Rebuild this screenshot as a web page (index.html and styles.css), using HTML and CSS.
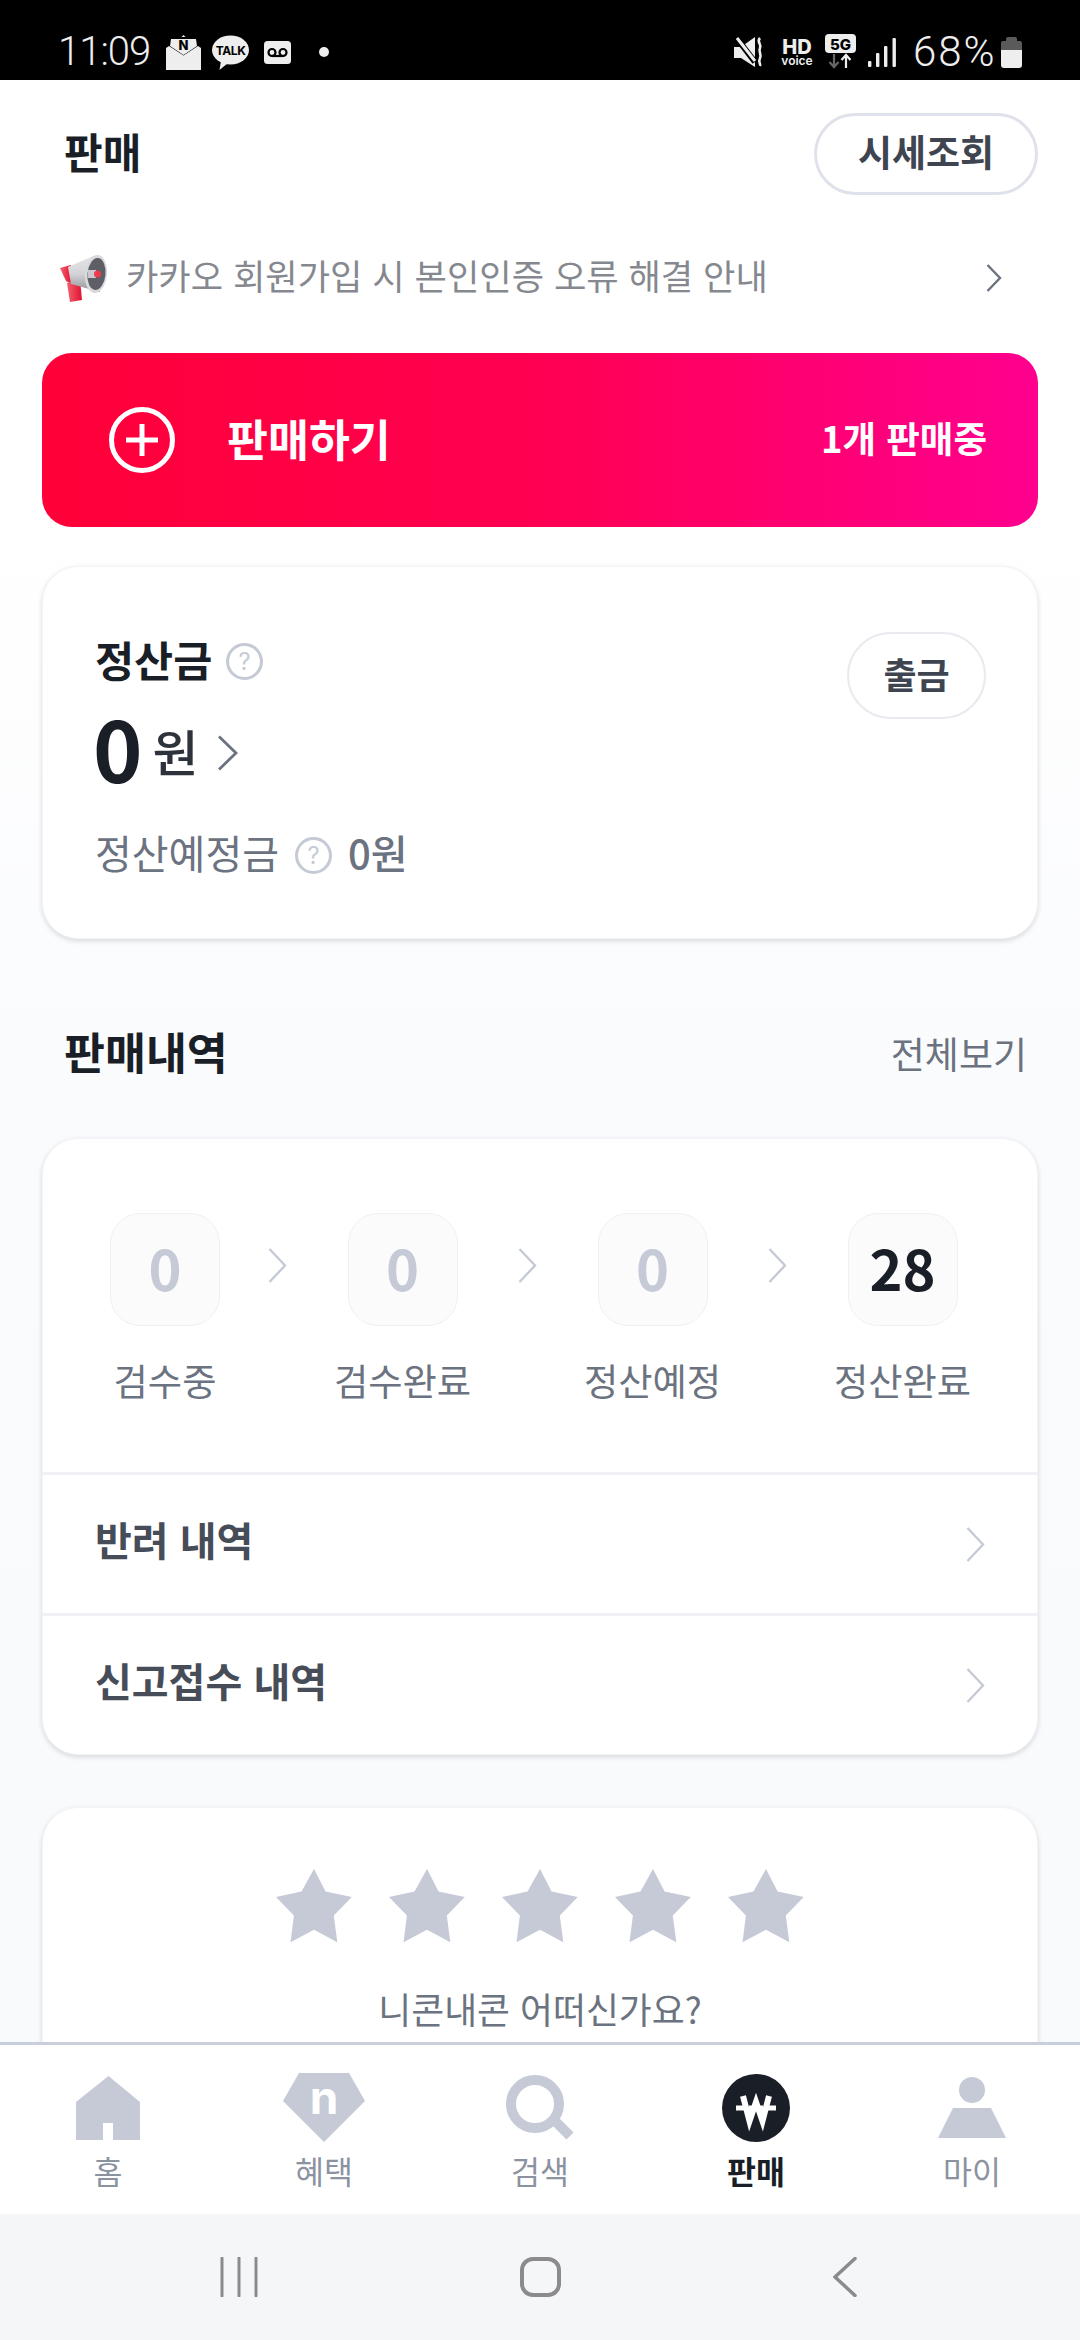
FILE: index.html
```html
<!DOCTYPE html>
<html lang="ko">
<head>
<meta charset="utf-8">
<title>판매</title>
<link rel="stylesheet" href="styles.css">
</head>
<body>
<div class="app">
  <header class="status">
    <span class="st-time">11:09</span>
    <svg class="st-mail" width="35" height="35" viewBox="0 0 35 35"><path d="M15.5 2 17.5 0 19.500 2Z" fill="#eee"/><path d="M4 11 5 4H30L31 11 17.500 20Z" fill="#eee"/><path d="M0 13 3 11 17.500 20.500 32 11 35 13V35H0Z" fill="#eee"/><text x="17.500" y="15" class="st-n">N</text></svg>
    <svg class="st-talk" width="37" height="35" viewBox="0 0 37 35"><ellipse cx="18.500" cy="15" rx="18.500" ry="14.500" fill="#eee"/><path d="M9 26 7.500 35 16 28Z" fill="#eee"/><text x="18.500" y="19.500" class="st-tk">TALK</text></svg>
    <svg class="st-vm" width="27" height="23" viewBox="0 0 27 23"><rect width="27" height="23" rx="3.500" fill="#eee"/><circle cx="8" cy="11.500" r="3.500" fill="none" stroke="#000" stroke-width="2.200"/><circle cx="19" cy="11.500" r="3.500" fill="none" stroke="#000" stroke-width="2.200"/><path d="M8 15H19" stroke="#000" stroke-width="2.200"/></svg>
    <span class="st-dot"></span>
    <div class="st-right">
      <svg width="29" height="30" viewBox="0 0 29 30"><path d="M0 10H7L21 0V30L7 21H0Z" fill="#eee"/><path d="M1 -1 21 25" stroke="#000" stroke-width="6"/><path d="M3 1 21 24" stroke="#eee" stroke-width="3"/><path d="M26 1C22 5 28 7 26 11 24 15 28 17 26 21 24 25 27 27 26 29" fill="none" stroke="#eee" stroke-width="2.600"/></svg>
      <svg class="st-hd" width="34" height="40" viewBox="0 -5 34 40"><text x="17" y="17" class="st-hdt">HD</text><text x="17" y="28" class="st-voice">voice</text></svg>
      <svg class="st-5g" width="31" height="35" viewBox="0 0 31 35"><rect width="31" height="19" rx="4" fill="#eee"/><text x="15.500" y="15.500" class="st-5gt">5G</text><path d="M9 20V33M4.500 28 9 33 13.500 28" fill="none" stroke="#666" stroke-width="2.200"/><path d="M21 34V21M16.500 26 21 21 25.500 26" fill="none" stroke="#eee" stroke-width="2.200"/></svg>
      <svg class="st-sig" width="28" height="29" viewBox="0 0 28 29"><rect y="23" width="3.400" height="6" rx="1" fill="#eee"/><rect x="8" y="15" width="3.400" height="14" rx="1" fill="#eee"/><rect x="16" y="8" width="3.400" height="21" rx="1" fill="#eee"/><rect x="24.500" width="3.400" height="29" rx="1" fill="#eee"/></svg>
      <span class="st-pct">68%</span>
      <svg class="st-bat" width="21" height="31" viewBox="0 0 21 31"><path d="M5 4V2Q5 0 7 0H14Q16 0 16 2V4H19Q21 4 21 6V13H0V6Q0 4 2 4Z" fill="#5a5a5a"/><path d="M0 13H21V28Q21 31 18 31H3Q0 31 0 28Z" fill="#eee"/></svg>
    </div>
  </header>

  <main class="main">
    <div class="top">
      <h1 class="top-title">판매</h1>
      <button class="quote-btn">시세조회</button>
    </div>

    <div class="notice">
      <svg class="notice-icon" width="48" height="47" viewBox="0 0 48 47">
        <defs>
          <linearGradient id="cone" x1="0" y1="0" x2="0" y2="1"><stop offset="0" stop-color="#e6e6e8"/><stop offset=".5" stop-color="#d4d4d8"/><stop offset="1" stop-color="#8f8f95"/></linearGradient>
          <linearGradient id="red" x1="0" y1="0" x2="1" y2="0"><stop offset="0" stop-color="#f3606f"/><stop offset="1" stop-color="#e0122f"/></linearGradient>
        </defs>
        <path d="M0 13 11 10 12 29 6 26Z" fill="url(#red)"/>
        <path d="M7 28 20 24 22 45 10 47Z" fill="url(#red)"/>
        <path d="M8 12 33 1 40 37 11 29Z" fill="url(#cone)"/>
        <ellipse cx="36" cy="19" rx="11" ry="19" transform="rotate(6 36 19)" fill="#d9d9de"/>
        <ellipse cx="36.500" cy="19" rx="9" ry="16" transform="rotate(6 36.500 19)" fill="#5e5e66"/>
        <path d="M28 15H36V23H28Z" fill="#c8c8ce"/>
        <circle cx="37.500" cy="19" r="3.500" fill="#f0384f"/>
      </svg>
      <span class="notice-text">카카오 회원가입 시 본인인증 오류 해결 안내</span>
      <svg class="chev" width="16" height="28" viewBox="0 0 16 28"><path d="M1.500 1 14 14 1.500 27" fill="none" stroke="#6b7280" stroke-width="2.400"/></svg>
    </div>

    <a class="sell">
      <svg width="66" height="66" viewBox="0 0 66 66"><circle cx="33" cy="33" r="30.500" fill="none" stroke="#fff" stroke-width="5"/><path d="M33 17V49M17 33H49" stroke="#fff" stroke-width="5"/></svg>
      <span class="sell-label">판매하기</span>
      <span class="sell-count">1개 판매중</span>
    </a>

    <section class="card balance">
      <div class="bal-left">
        <div class="bal-title"><span class="bal-title-text">정산금</span>
          <svg class="help" width="37" height="37" viewBox="0 0 36 36"><circle cx="18" cy="18" r="16.500" fill="none" stroke="#c5cad6" stroke-width="3"/><text x="18" y="26" class="help-q">?</text></svg>
        </div>
        <div class="bal-amount"><span class="bal-num">0</span><span class="bal-unit">원</span>
          <svg width="22" height="36" viewBox="0 0 22 36"><path d="M2 1.500 19 18 2 34.500" fill="none" stroke="#6b7280" stroke-width="2.800"/></svg>
        </div>
        <div class="bal-sub"><span class="bal-sub-text">정산예정금</span>
          <svg class="help" width="37" height="37" viewBox="0 0 36 36"><circle cx="18" cy="18" r="16.500" fill="none" stroke="#c5cad6" stroke-width="3"/><text x="18" y="26" class="help-q">?</text></svg>
          <span class="bal-sub-val">0원</span>
        </div>
      </div>
      <button class="withdraw">출금</button>
    </section>

    <div class="sec-head">
      <h2 class="sec-title">판매내역</h2>
      <span class="sec-more">전체보기</span>
    </div>

    <section class="card history">
      <div class="steps">
        <div class="step"><div class="step-box">0</div><div class="step-label">검수중</div></div>
        <svg class="step-chev" width="19" height="35" viewBox="0 0 19 35"><path d="M1.500 1 17 17.500 1.500 34" fill="none" stroke="#c5cad6" stroke-width="2.400"/></svg>
        <div class="step"><div class="step-box">0</div><div class="step-label">검수완료</div></div>
        <svg class="step-chev" width="19" height="35" viewBox="0 0 19 35"><path d="M1.500 1 17 17.500 1.500 34" fill="none" stroke="#c5cad6" stroke-width="2.400"/></svg>
        <div class="step"><div class="step-box">0</div><div class="step-label">정산예정</div></div>
        <svg class="step-chev" width="19" height="35" viewBox="0 0 19 35"><path d="M1.500 1 17 17.500 1.500 34" fill="none" stroke="#c5cad6" stroke-width="2.400"/></svg>
        <div class="step"><div class="step-box is-on">28</div><div class="step-label">정산완료</div></div>
      </div>
      <div class="hist-row"><span class="hist-text">반려 내역</span>
        <svg width="19" height="35" viewBox="0 0 19 35"><path d="M1.500 1 17 17.500 1.500 34" fill="none" stroke="#c5cad6" stroke-width="2.400"/></svg>
      </div>
      <div class="hist-row"><span class="hist-text">신고접수 내역</span>
        <svg width="19" height="35" viewBox="0 0 19 35"><path d="M1.500 1 17 17.500 1.500 34" fill="none" stroke="#c5cad6" stroke-width="2.400"/></svg>
      </div>
    </section>

    <section class="card rating">
      <div class="stars">
        <svg width="76" height="74" viewBox="0 0 76 74"><path class="star" d="M38 0 49.600 22.500 75.800 28 57.800 46.400 61.300 73.200 38 60.700 14.500 73.200 17.900 46.400 0 28 25.500 22.500Z"/></svg>
        <svg width="76" height="74" viewBox="0 0 76 74"><path class="star" d="M38 0 49.600 22.500 75.800 28 57.800 46.400 61.300 73.200 38 60.700 14.500 73.200 17.900 46.400 0 28 25.500 22.500Z"/></svg>
        <svg width="76" height="74" viewBox="0 0 76 74"><path class="star" d="M38 0 49.600 22.500 75.800 28 57.800 46.400 61.300 73.200 38 60.700 14.500 73.200 17.900 46.400 0 28 25.500 22.500Z"/></svg>
        <svg width="76" height="74" viewBox="0 0 76 74"><path class="star" d="M38 0 49.600 22.500 75.800 28 57.800 46.400 61.300 73.200 38 60.700 14.500 73.200 17.900 46.400 0 28 25.500 22.500Z"/></svg>
        <svg width="76" height="74" viewBox="0 0 76 74"><path class="star" d="M38 0 49.600 22.500 75.800 28 57.800 46.400 61.300 73.200 38 60.700 14.500 73.200 17.900 46.400 0 28 25.500 22.500Z"/></svg>
      </div>
      <p class="rating-q">니콘내콘 어떠신가요?</p>
    </section>
  </main>

  <nav class="tabs">
    <a class="tab">
      <svg width="100" height="80" viewBox="0 -8 100 80"><path class="tab-ic" d="M50.500 3 82 29V67H55V50H45V67H18V29Z"/></svg>
      <span>홈</span>
    </a>
    <a class="tab">
      <svg width="100" height="80" viewBox="0 -8 100 80"><path class="tab-ic" d="M25 0H75L91 28 50 69 9 28Z"/><text x="50" y="41" class="tab-n">n</text></svg>
      <span>혜택</span>
    </a>
    <a class="tab">
      <svg width="100" height="80" viewBox="0 -8 100 80"><circle cx="45" cy="31" r="24" fill="none" stroke="#c5cad6" stroke-width="10"/><path d="M62 45 80 63" stroke="#c5cad6" stroke-width="10"/></svg>
      <span>검색</span>
    </a>
    <a class="tab is-active">
      <svg width="100" height="80" viewBox="0 -8 100 80"><circle cx="50" cy="35" r="34" fill="#1a1f27"/><path d="M37 23 43.500 48 50 29 56.500 48 63 23" fill="none" stroke="#fff" stroke-width="6"/><path d="M30 35H38M62 35H70M43 35H57" stroke="#fff" stroke-width="5"/></svg>
      <span>판매</span>
    </a>
    <a class="tab">
      <svg width="100" height="80" viewBox="0 -8 100 80"><circle class="tab-ic" cx="50" cy="17" r="13"/><path class="tab-ic" d="M31 35H69L84 65H16Z"/></svg>
      <span>마이</span>
    </a>
  </nav>

  <footer class="sysnav">
    <svg width="38" height="40" viewBox="0 0 38 40"><path d="M2 1V39M19 1V39M36 1V39" stroke="#8b8b8d" stroke-width="3" stroke-linecap="round"/></svg>
    <svg class="sys-home" width="41" height="40" viewBox="0 0 41 40"><rect x="2" y="2" width="37" height="36" rx="11" fill="none" stroke="#8b8b8d" stroke-width="4"/></svg>
    <svg class="sys-back" width="24" height="40" viewBox="0 0 24 40"><path d="M22 1.500 2 20 22 38.500" fill="none" stroke="#8b8b8d" stroke-width="3.500" stroke-linecap="round"/></svg>
  </footer>
</div>
</body>
</html>
```
FILE: styles.css
```css
* { box-sizing: border-box; }
html, body { margin: 0; padding: 0; }
body { font-family: "Noto Sans CJK KR", sans-serif; color: #1a1f27; background: #fff; }
h1, h2, p { margin: 0; }
button { font: inherit; background: #fff; cursor: pointer; }

.app { width: 1080px; height: 2340px; display: flex; flex-direction: column; overflow: hidden; }

/* status bar */
.status { height: 80px; flex: none; background: #000; color: #eee; display: flex; align-items: center; padding: 24px 58px 0; }
.status svg { display: block; flex: none; }
.st-time { font-family: Roboto, sans-serif; font-weight: 300; font-size: 40px; line-height: 40px; width: 93px; letter-spacing: -1px; }
.st-mail { margin-left: 15px; }
.st-talk { margin-left: 11px; }
.st-vm { margin-left: 15px; }
.st-dot { width: 10px; height: 10px; border-radius: 50%; background: #eee; margin-left: 28px; }
.st-right { margin-left: auto; display: flex; align-items: center; }
.st-hd { margin-left: 17px; }
.st-5g { margin-left: 11px; margin-top: -2px; }
.st-sig { margin-left: 12px; }
.st-pct { font-family: Roboto, sans-serif; font-weight: 300; font-size: 42px; line-height: 40px; margin-left: 17px; width: 88px; letter-spacing: 2px; white-space: nowrap; }
.st-n { font: 800 13px Inter, sans-serif; text-anchor: middle; fill: #000; }
.st-tk { font: 700 12px Inter, sans-serif; text-anchor: middle; fill: #000; letter-spacing: -.4px; }
.st-hdt { font: 800 20px Inter, sans-serif; text-anchor: middle; fill: #eee; }
.st-voice { font: 600 12px Inter, sans-serif; text-anchor: middle; fill: #eee; }
.st-5gt { font: 800 15px Inter, sans-serif; text-anchor: middle; fill: #000; }

/* scrolling area */
.main { flex: 1; min-height: 0; overflow: hidden; padding: 33px 42px 0; background: linear-gradient(#fff 0, #fff 420px, #fafbfd 1000px, #f9fafc 100%); }

.top { display: flex; align-items: center; justify-content: space-between; padding-left: 22px; }
.top-title { font-size: 42px; line-height: 76px; padding-bottom: 6px; font-weight: 700; }
.quote-btn { width: 224px; height: 82px; border-radius: 41px; border: 3px solid #dfe2ea; color: #3f4550; font-size: 37px; font-weight: 700; padding: 0 0 6px; }

.notice { margin-top: 53px; height: 60px; padding: 0 36px 0 18px; display: flex; align-items: center; }
.notice-icon { flex: none; display: block; }
.notice-text { margin: 0 0 6px 18px; font-size: 35.200px; line-height: 46px; color: #85888e; flex: 1; white-space: nowrap; }

.sell { margin-top: 45px; height: 174px; border-radius: 30px; display: flex; align-items: center; padding: 0 51px 0 67px; color: #fff; background: linear-gradient(90deg, #ff0038 0, #ff0052 50%, #ff008f 100%); }
.sell svg { flex: none; display: block; }
.sell-label { margin: 0 0 6px 52px; font-size: 44.500px; font-weight: 700; }
.sell-count { margin: 0 0 6px auto; font-size: 36.500px; font-weight: 700; }

.card { background: #fff; border: 1px solid #f3f4f7; border-radius: 36px; box-shadow: 0 2px 5px rgba(30, 35, 50, .16); }

.balance { margin-top: 39px; height: 373px; display: flex; justify-content: space-between; align-items: flex-start; padding: 69px 51px 0 52px; }
.bal-title { display: flex; align-items: center; height: 50px; font-size: 42.500px; font-weight: 700; }
.bal-title-text { margin-bottom: 6px; }
.help { display: block; flex: none; margin-left: 14px; }
.help-q { font: 400 23px Inter, sans-serif; fill: #c5cad6; text-anchor: middle; }
.bal-amount { margin-top: 22px; height: 90px; display: flex; align-items: center; }
.bal-num { margin: 0 0 12px -2px; font-size: 84px; line-height: 90px; font-weight: 700; }
.bal-unit { margin: 0 0 6px 10px; font-size: 50px; font-weight: 500; color: #2e323a; }
.bal-amount svg { margin-left: 18px; display: block; }
.bal-sub { margin-top: 35px; height: 44px; display: flex; align-items: center; font-size: 40px; color: #6b7280; white-space: nowrap; }
.bal-sub-text { margin-bottom: 6px; }
.bal-sub .help { margin-left: 16px; }
.bal-sub-val { margin: 0 0 6px 16px; font-weight: 500; }
.withdraw { margin-top: -4px; width: 139px; height: 87px; border-radius: 44px; border: 2px solid #e8eaef; color: #3f4550; font-size: 36px; font-weight: 700; padding: 0 0 6px; }

.sec-head { margin-top: 91px; height: 48px; padding: 0 11px 0 22px; display: flex; align-items: center; justify-content: space-between; }
.sec-title { font-size: 44.500px; font-weight: 700; line-height: 48px; margin-bottom: 6px; }
.sec-more { font-size: 37px; color: #6b7280; margin-bottom: 3px; }

.history { margin-top: 60px; height: 617px; overflow: hidden; }
.steps { height: 333px; padding: 74px 0 0 67px; display: grid; grid-template-columns: 110px 19px 135px 19px 135px 19px 135px; column-gap: 48px; align-items: start; }
.step { display: flex; flex-direction: column; align-items: center; }
.step-box { width: 110px; height: 113px; border-radius: 30px; border: 1px solid #eff0f3; background: #fbfbfc; color: #c5cad6; font-size: 56px; font-weight: 700; display: flex; align-items: center; justify-content: center; padding-bottom: 6px; }
.step-box.is-on { color: #1a1f27; }
.step-label { margin-top: 34px; height: 46px; line-height: 40px; padding-bottom: 6px; font-size: 37.300px; color: #6b7280; white-space: nowrap; }
.step-chev { display: block; margin-top: 35px; }
.hist-row { height: 141px; border-top: 3px solid #eff1f5; padding: 0 52px; display: flex; align-items: center; justify-content: space-between; font-size: 40px; font-weight: 600; color: #464c58; }
.hist-row svg { display: block; }
.hist-text { margin-bottom: 10px; }

.rating { margin-top: 52px; height: 300px; padding-top: 61px; display: flex; flex-direction: column; align-items: center; }
.stars { display: flex; gap: 37px; }
.stars svg { display: block; }
.star { fill: #c5cad6; }
.rating-q { margin-top: 44px; font-size: 35.800px; line-height: 42px; padding-bottom: 4px; color: #6b7280; }

/* tab bar */
.tabs { height: 172px; flex: none; background: #fff; border-top: 3px solid #c9cedb; display: flex; }
.tab { flex: 1; display: flex; flex-direction: column; align-items: center; padding-top: 20px; color: #8b93a1; font-size: 31.500px; }
.tab svg { display: block; }
.tab span { margin-top: 5px; line-height: 40px; }
.tab-ic { fill: #c5cad6; }
.tab-n { font: 700 46px Inter, sans-serif; fill: #fff; text-anchor: middle; }
.tab.is-active { color: #1a1f27; font-weight: 700; }

/* system navigation */
.sysnav { height: 126px; flex: none; background: #f5f6f8; display: flex; align-items: flex-start; padding: 43px 0 0 220px; }
.sysnav svg { display: block; }
.sys-home { margin-left: 262px; }
.sys-back { margin-left: 272px; }
```
